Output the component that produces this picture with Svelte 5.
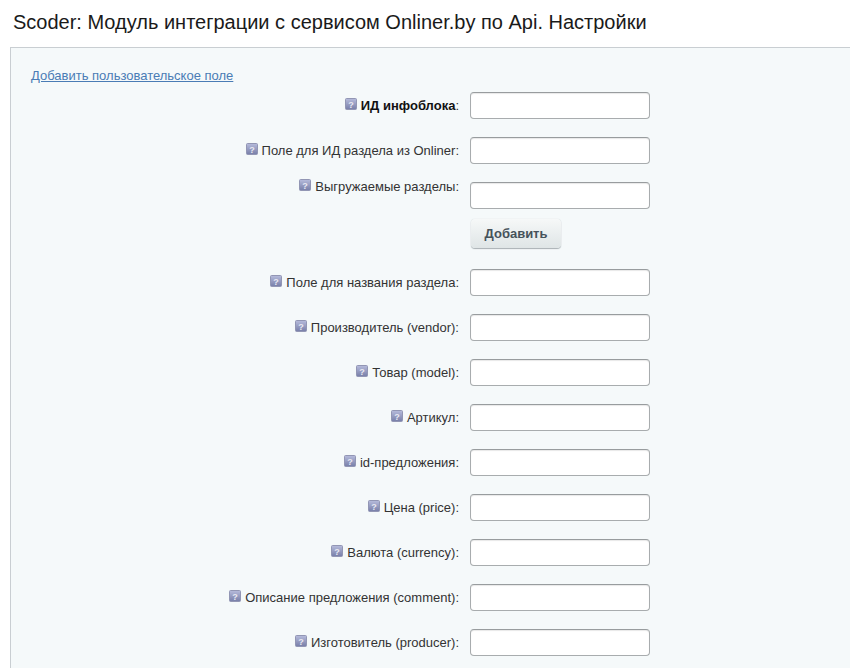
<script lang="ts">
	const before = [
		{ label: 'ИД инфоблока', bold: true },
		{ label: 'Поле для ИД раздела из Onliner' },
	];
	const after = [
		'Поле для названия раздела',
		'Производитель (vendor)',
		'Товар (model)',
		'Артикул',
		'id-предложения',
		'Цена (price)',
		'Валюта (currency)',
		'Описание предложения (comment)',
		'Изготовитель (producer)',
	];
</script>

{#snippet hint()}
	<svg class="hint" width="12" height="12" viewBox="0 0 12 12">
		<defs>
			<linearGradient id="hint-bg" x1="0" y1="0" x2="0" y2="1">
				<stop offset="0" stop-color="#b7bcdc" />
				<stop offset="1" stop-color="#777ea8" />
			</linearGradient>
		</defs>
		<rect x="0.5" y="0.5" width="11" height="11" rx="1" fill="url(#hint-bg)" stroke="#9296b4" />
		<text x="6" y="9.5" text-anchor="middle" class="hint-mark">?</text>
	</svg>
{/snippet}

<div class="page">
	<h1 class="title">Scoder: Модуль интеграции с сервисом Onliner.by по Api. Настройки</h1>
	<div class="panel">
		<a class="add-link" href="#add">Добавить пользовательское поле</a>
		<div class="form">
			{#each before as row}
				<div class="row">
					<div class="label">
						{@render hint()}
						<span><span class:bold={row.bold}>{row.label}</span>:</span>
					</div>
					<input class="field" type="text" />
				</div>
			{/each}
			<div class="row row-top">
				<div class="label label-top">
					{@render hint()}
					<span>Выгружаемые разделы:</span>
				</div>
				<div class="multi">
					<input class="field" type="text" />
					<button class="btn">Добавить</button>
				</div>
			</div>
			{#each after as label}
				<div class="row">
					<div class="label">
						{@render hint()}
						<span>{label}:</span>
					</div>
					<input class="field" type="text" />
				</div>
			{/each}
		</div>
	</div>
</div>

<style>
	:global(body) { background: #fff; overflow: hidden; }
	.page { font-family: "Liberation Sans", Arial, sans-serif; height: 668px; overflow: hidden; }
	.title { margin: 0; padding: 10px 0 0 13px; height: 37px; font-size: 20px; font-weight: 400; line-height: 24px; color: #1a1a1a; }
	.panel { margin-left: 10px; border: 1px solid #c9ced2; border-right: none; border-bottom: none; background: #f5f9fa; padding: 20px 0 0 20px; height: 640px; }
	.add-link { display: block; font-size: 13px; line-height: 15px; color: #4a7cb5; text-decoration: underline; }
	.form { display: flex; flex-direction: column; gap: 18px; margin-top: 9px; }
	.row { display: grid; grid-template-columns: 428px 180px; column-gap: 11px; align-items: center; }
	.row-top { align-items: start; }
	.label { display: flex; justify-content: flex-end; align-items: center; gap: 4px; font-size: 13px; line-height: 14px; color: #333; }
	.label-top { margin-top: -2px; }
	.bold { font-weight: 700; color: #111; }
	.hint { flex: none; margin-top: -4px; }
	.hint-mark { font-family: "Liberation Sans", Arial, sans-serif; font-size: 9px; font-weight: 700; fill: #e8e9f2; }
	.field { box-sizing: border-box; display: block; width: 180px; height: 27px; margin: 0; padding: 0 5px; background: #fff; border: 1px solid #a8acae; border-top-color: #989c9e; border-radius: 4px; box-shadow: inset 0 1px 1px #e8e8e8; }
	.multi { display: flex; flex-direction: column; align-items: flex-start; gap: 10px; margin-bottom: 3px; }
	.btn { width: 90px; height: 29px; margin-left: 1px; padding: 0; font-family: "Liberation Sans", Arial, sans-serif; font-size: 13px; font-weight: 700; color: #46525a; background: linear-gradient(#f6f8f8, #dfe5e6); border: none; border-radius: 4px; box-shadow: 0 1px 1px #a9b0b4, 0 0 1px #c5cbce; }
</style>
